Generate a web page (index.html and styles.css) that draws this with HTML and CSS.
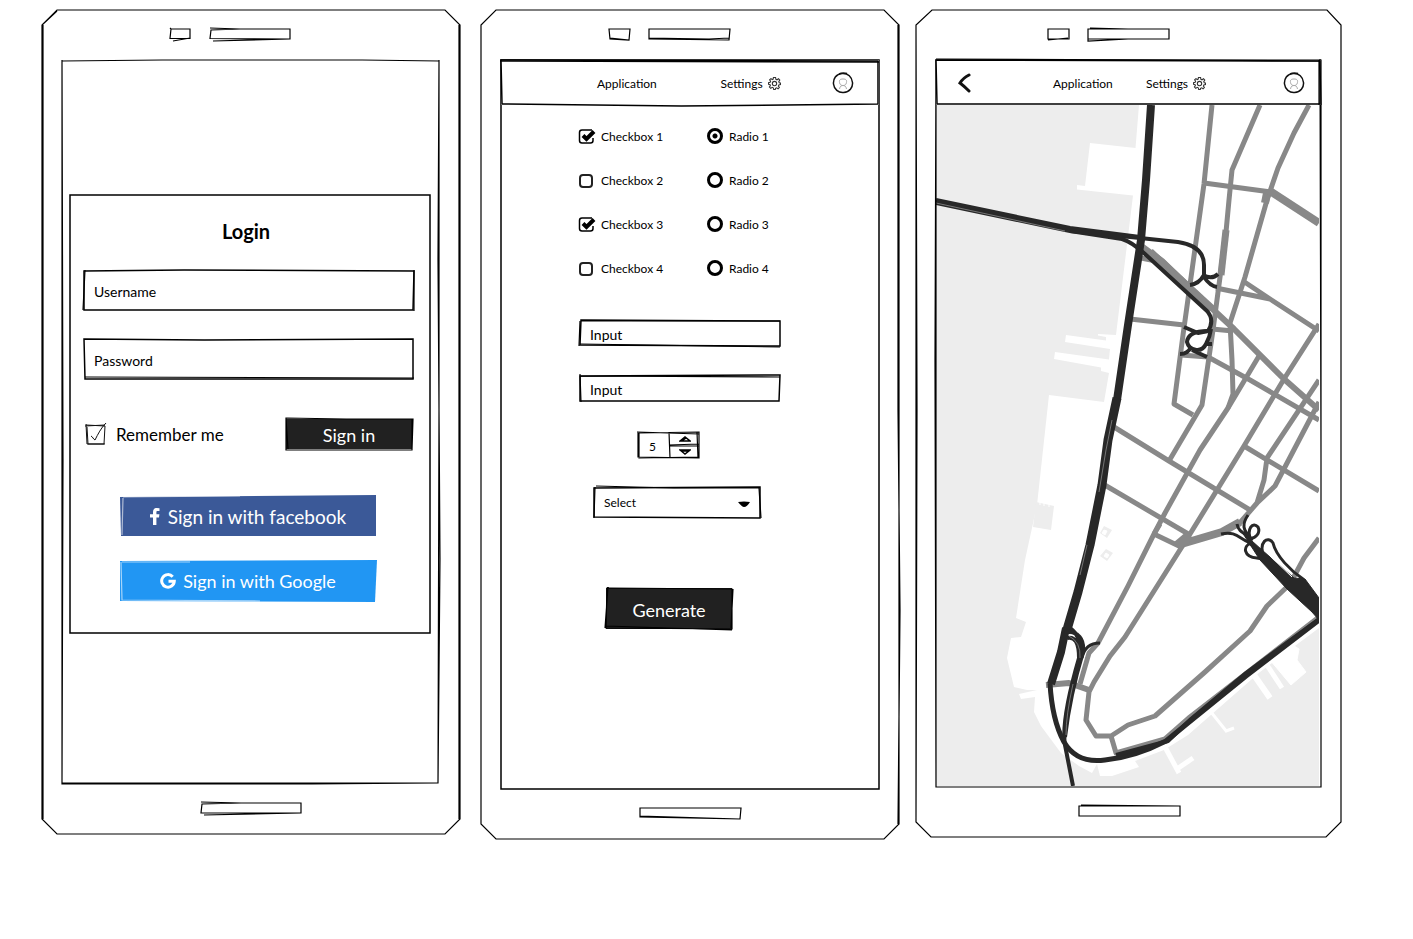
FILE: index.html
```html
<!DOCTYPE html>
<html lang="en">
<head>
<meta charset="utf-8">
<title>App wireframes</title>
<link rel="stylesheet" href="styles.css">
</head>
<body>
<svg class="defs" aria-hidden="true">
  <symbol id="gear" viewBox="0 0 24 24"><path d="M10 1h4l.6 3.2 2 .9L19.400 3.200l2.300 2.600-1.800 2.700.8 2L23 11v3l-3 .8-.8 2 1.800 2.600-2.400 2.400-2.700-1.800-2 .9L13.500 23h-3l-.8-3-2-.9-2.600 1.800-2.500-2.500 1.800-2.600-.8-2L1 13.500v-3l3-.7.8-2L3 5.200 5.400 3l2.500 1.700 1.700-.8z"/><circle cx="12" cy="12" r="4"/></symbol>
  <symbol id="avatar" viewBox="0 0 22 22"><path class="ring" d="M10 1.500C4 2 1 7 1.500 12c.5 5 5 9 10 8.500 6-.5 9.500-5 9-10C20 5 16 1 10 1.500M7 2c2-1 5-1.300 8-.5"/><path class="person" d="M8 12c-1.500-4 0-5 3-5s4.500 1 3 5c-1 2-5 2-6 0M7.500 17c.5-3 2-3.500 3.500-3.500s3 .5 3.500 3.500"/></symbol>
  <symbol id="tick" viewBox="0 0 18 16" overflow="visible"><path class="box" d="M14 2H4Q1.500 2 1.500 4.500v8Q1.500 15 4 15h8.500Q15 15 15 12.500V10"/><path class="bold" d="M5 7.500l3.500 3.500L16 3.500"/></symbol>
</svg>
<main class="board">

  <section class="phone phone-login" aria-label="Login screen">
    <svg class="sketch" viewBox="0 0 418 826" preserveAspectRatio="none" aria-hidden="true"><path d="M15 0H403L418 15V811L403 826H15L0 811V15zM1 15V811M417 15V811M0 15L15 1"/></svg>
    <div class="speaker">
      <span class="cam"><svg class="sketch" viewBox="0 0 20 10" preserveAspectRatio="none"><path d="M0-1L1 0H20V9.500L0 9.500 1 0M3 12L20 9"/></svg></span>
      <span class="slot"><svg class="sketch" viewBox="0 0 80 10" preserveAspectRatio="none"><path d="M0-1L30 0H80V10L0 9.500 1 1 30 0M3 12L80 10"/></svg></span>
    </div>
    <div class="screen login-screen">
      <svg class="sketch" viewBox="0 0 378 726" preserveAspectRatio="none" aria-hidden="true"><path d="M0 1L100 0H300L377 1V350L376 725 0 725zM0 0L1 400 0 726H250L376 725M377 0L376 200 378 500 376 725"/></svg>
      <form class="card">
        <svg class="sketch" viewBox="0 0 360 440" preserveAspectRatio="none" aria-hidden="true"><path class="firm" d="M0 0H360V440H0z"/></svg>
        <h1>Login</h1>
        <div class="field"><svg class="sketch" viewBox="0 0 330 40" preserveAspectRatio="none"><path class="firm" d="M0 1L100 0 330 1 329 40 0 40z"/><path d="M1 0L-1 40M330 0V41"/></svg><input type="text" placeholder="Username" aria-label="Username"></div>
        <div class="field"><svg class="sketch" viewBox="0 0 330 40" preserveAspectRatio="none"><path class="firm" d="M0 0L120 1 329 0V40L1 40z"/><path d="M1 38L330 39"/></svg><input type="password" placeholder="Password" aria-label="Password"></div>
        <div class="row">
          <label class="remember"><span class="box20"><input type="checkbox" checked><svg viewBox="0 0 22 22" aria-hidden="true"><path d="M1 2L20 3 19 21 2 21 1 1M0 3L20 2M2 4l1 17h17"/><path class="mark" d="M6 13c2 1 2 3 4 4 3-6 6-12 11-17"/></svg></span>Remember me</label>
          <button class="btn dark signin" type="button"><svg class="sketch" viewBox="0 0 126 30" preserveAspectRatio="none"><path d="M0-1L60 0H127L126 31H0zM0 0L2 30M126 0V30"/></svg><span>Sign in</span></button>
        </div>
        <button class="btn social facebook" type="button"><svg class="sketch fill" viewBox="0 0 256 40" preserveAspectRatio="none"><path d="M0 1L256-1V40L1 40z"/><path class="light" d="M3 2L2 39M3 1L120 0"/></svg><svg class="fb" viewBox="0 0 10 17" aria-hidden="true"><path d="M3 17V9.500H0V6.300h3V4C3 1.300 4.500 0 6.800 0L9.500.2V3H7.700C6.600 3 6.400 3.500 6.400 4.300v2h3L9 9.500H6.400V17z"/></svg><span>Sign in with facebook</span></button>
        <button class="btn social google" type="button"><svg class="sketch fill" viewBox="0 0 256 40" preserveAspectRatio="none"><path d="M0 0L257-1 255 41 0 40z"/><path class="light" d="M1 1L2 39 140 40M2 1H70"/></svg><svg class="goo" viewBox="0 0 16 16" aria-hidden="true"><path d="M12.700 3.700A6.300 6.300 0 1 0 14.300 8.200H8.500"/></svg><span>Sign in with Google</span></button>
      </form>
    </div>
    <div class="home"><span class="slot wide"><svg class="sketch" viewBox="0 0 100 10" preserveAspectRatio="none"><path d="M0-1L40 0H100V10H0L1 1 40 0M3 12L100 10"/></svg></span></div>
  </section>

  <section class="phone" aria-label="Form screen">
    <svg class="sketch" viewBox="0 0 418 829" preserveAspectRatio="none" aria-hidden="true"><path d="M15 0H403L418 15V814L403 829H15L0 814V15zM417 15V400L419 600 417 814"/></svg>
    <div class="speaker">
      <span class="cam"><svg class="sketch" viewBox="0 0 20 10" preserveAspectRatio="none"><path d="M0 0H21L20 11 1 10zM1 9L20 11"/></svg></span>
      <span class="slot"><svg class="sketch" viewBox="0 0 80 10" preserveAspectRatio="none"><path d="M0 0H81L80 11 0 10zM0 9L60 10 80 9"/></svg></span>
    </div>
    <div class="screen form-screen">
      <svg class="sketch" viewBox="0 0 377 728" preserveAspectRatio="none" aria-hidden="true"><path class="firm" d="M0 0H377V728H0z"/></svg>
      <nav class="bar">
        <svg class="sketch" viewBox="0 0 377 44" preserveAspectRatio="none"><path class="firm" d="M0 0L376 1 376 43 180 45 1 43z"/><path class="firm" d="M-1 1L377 2"/></svg>
        <a href="#application">Application</a>
        <a class="settings" href="#settings">Settings<svg class="gear"><use href="#gear"/></svg></a>
        <a class="user" href="#account" aria-label="Account"><svg class="avatar"><use href="#avatar"/></svg></a>
      </nav>
      <form class="controls">
        <div class="options">
          <label><span class="pick"><input type="checkbox" checked><svg class="cb"><use href="#tick"/></svg></span>Checkbox 1</label>
          <label><input class="radio" type="radio" name="choice" checked>Radio 1</label>
          <label><span class="pick"><input type="checkbox"></span>Checkbox 2</label>
          <label><input class="radio" type="radio" name="choice">Radio 2</label>
          <label><span class="pick"><input type="checkbox" checked><svg class="cb"><use href="#tick"/></svg></span>Checkbox 3</label>
          <label><input class="radio" type="radio" name="choice">Radio 3</label>
          <label><span class="pick"><input type="checkbox"></span>Checkbox 4</label>
          <label><input class="radio" type="radio" name="choice">Radio 4</label>
        </div>
        <div class="field small"><svg class="sketch" viewBox="0 0 200 26" preserveAspectRatio="none"><path class="firm" d="M1 0L200 1V26L0 25z"/><path d="M0 1L-1 26M0 24L200 27M1 1H200"/></svg><input type="text" placeholder="Input" aria-label="First input"></div>
        <div class="field small"><svg class="sketch" viewBox="0 0 200 26" preserveAspectRatio="none"><path class="firm" d="M0 1L200 0 199 26H0z"/><path d="M0-1L1 27M0 1L200 2"/></svg><input type="text" placeholder="Input" aria-label="Second input"></div>
        <div class="stepper">
          <svg class="sketch" viewBox="0 0 61 26" preserveAspectRatio="none"><path d="M0 1L61 0V26L0 25zM-1 0L61 2M1 0V26L61 25M31 0L32 26M31 13L61 12M32 14L61 14M59 0L60 26"/></svg>
          <input type="text" inputmode="numeric" value="5" aria-label="Quantity">
          <div class="steps"><button type="button" aria-label="Increase"><svg viewBox="0 0 12 6"><path d="M1 5L6 1 11 5zM2 5L7 2"/></svg></button><button type="button" aria-label="Decrease"><svg viewBox="0 0 12 6"><path d="M1 1L6 5 11 1zM2 2h8"/></svg></button></div>
        </div>
        <div class="select"><svg class="sketch" viewBox="0 0 166 31" preserveAspectRatio="none"><path class="firm" d="M0 1L166 0V31L0 30z"/><path d="M2-1L80 1 165 1 167 31M1 0L0 31"/></svg><select aria-label="Select"><option>Select</option></select><svg class="arrow" viewBox="0 0 12 8"><path d="M0 2Q6 1 12 2 9 7 6 7 4 7 0 2"/></svg></div>
        <button class="btn dark generate" type="button"><svg class="sketch" viewBox="0 0 126 41" preserveAspectRatio="none"><path d="M1 0L126 1V41L0 40zM2-1L-1 40M0 38L126 42M127 1L125 40"/></svg><span>Generate</span></button>
      </form>
    </div>
    <div class="home"><span class="slot wide"><svg class="sketch" viewBox="0 0 100 10" preserveAspectRatio="none"><path d="M0 0H101L100 11 0 9zM0 8L100 11"/></svg></span></div>
  </section>

  <section class="phone" aria-label="Map screen">
    <svg class="sketch" viewBox="0 0 425 827" preserveAspectRatio="none" aria-hidden="true"><path d="M16 0H411L425 15V812L410 827H15L0 812V15zM0 15L1 400 0 812"/></svg>
    <div class="speaker">
      <span class="cam"><svg class="sketch" viewBox="0 0 20 10" preserveAspectRatio="none"><path d="M0 0H21V10H0zM0 11L20 9"/></svg></span>
      <span class="slot"><svg class="sketch" viewBox="0 0 80 10" preserveAspectRatio="none"><path d="M0 0H81V10H0zM0 9V12L40 10M2-1L40 0"/></svg></span>
    </div>
    <div class="screen map-screen">
      <svg class="sketch" viewBox="0 0 385 726" preserveAspectRatio="none" aria-hidden="true"><path d="M0 0H385V726H0zM0 0L-1 300 0 726H200M384 0L385 400"/></svg>
      <nav class="bar bar-back">
        <svg class="sketch" viewBox="0 0 385 44" preserveAspectRatio="none"><path class="firm" d="M0 0L384 1V43H1z"/><path d="M0-1L240 0 384 1M384-1L385 44M383 0V44"/></svg>
        <button class="back" type="button" aria-label="Back"><svg viewBox="0 0 14 20"><path d="M11 2Q5 5 2 10 6 13 11 18"/></svg></button>
        <a href="#application">Application</a>
        <a class="settings" href="#settings">Settings<svg class="gear"><use href="#gear"/></svg></a>
        <a class="user" href="#account" aria-label="Account"><svg class="avatar"><use href="#avatar"/></svg></a>
      </nav>
      <svg class="map" viewBox="936 105 385 682" role="img" aria-label="City map">
        <clipPath id="land-area"><path d="M936 105H1319V786H936z"/></clipPath>
        <g clip-path="url(#land-area)">
        <g class="water">
          <path d="M936 105H1139L1135.500 148 1090 143 1085 186 1077 185V189.500L1133 195.500 1116 335 1098 334V335.500L1106 337V340.500L1066 335 1065 342 1110 349 1109 359.500 1055 352 1054 359 1101 367.500V371L1109 373 1104 402 1049 395 1037 505 1025 560 1016 618 1026 622 1021 637 1011 638 1007 658 1014 687 1027 690 1037 690 1019 694 1021 699 1035 697 1034 712 1041 726 1061 753 1079 766 1092 773 1097 764 1100 776 1112 776 1139 767 1135 761 1164 750 1188 735 1260 672 1319 628V786H936z"/>
          <path d="M1036 502L1054 506 1051 530 1033 527z"/>
          <path d="M1104 526l8 4-5 8-7-5zM1106 549l7 4-6 8-7-5z"/>
        </g>
        <g class="pier">
          <path d="M1165 747L1179 773M1177 769L1193 758" stroke-width="5"/><path d="M1211 712L1227 732M1226 731L1234 728" stroke-width="3"/><path d="M1254 675L1270 698" stroke-width="6"/><path d="M1265 662L1282 688" stroke-width="5"/>
          <path class="land" d="M1270 660L1291 685 1306 672 1297 660 1299 649 1288 642zM1104 530l3 1-2 4-3-2zM1106 553l3 2-2 3-3-2z"/>
          <path d="M1040 502v3M1044 503v3M1049 504v3" stroke-width="1"/>
        </g>
        <g class="street">
          <path d="M1212 105L1204 184 1183 335 1174 404 1193 415"/>
          <path d="M1260 105L1232 170 1229 200 1226 232 1213 330 1202 405 1169 461"/>
          <path d="M1309 105L1294 133 1278 168 1267 200 1245 277 1230 323 1232 360 1233 394 1228 408"/>
          <path d="M1226 230L1221 275"  stroke-width="7"/><path d="M1267 193L1265 203" stroke-width="8"/>
          <path d="M1204 183L1271 192"/><path d="M1270 191L1319 223" stroke-width="8"/>
          <path d="M1140 245L1162 261 1190 288 1234 329 1284 379 1319 410" stroke-width="6"/>
          <path d="M1150 252L1212 309" stroke-width="8"/>
          <path d="M1141 258L1156 261M1130 319L1184 325M1212 329L1233 331M1216 288L1270 299M1243 281L1270 299 1319 331M1319 324L1284 379 1244 446 1190 534 1125 637 1110 656 1094 682 1089 692 1086 720 1096 736H1111L1128 725 1155 716 1205 672 1250 631 1267 606 1290 584 1304 558 1319 538"/>
          <path d="M1259 356L1228 408 1200 450 1165 513 1154 534 1128 586 1098 643 1089 653 1080 684"/>
          <path d="M1181 355L1208 357 1250 380 1319 420M1319 380L1267 458 1264 480 1257 503 1238 525M1319 402L1275 486 1257 503M1244 446L1319 491M1114 427L1169 461 1250 510M1103 484L1190 535M1154 534L1181 547M1154 534L1160 524"/>
          <path d="M1178 545L1222 532 1240 522" stroke-width="8"/><path d="M1177 546L1190 535" stroke-width="10"/>
          <path d="M1046 685L1069 683 1089 690" stroke-width="6"/><path d="M1111 736L1116 753 1165 739 1190 717 1319 617"/>
        </g>
        <g class="highway">
          <path d="M1151 105L1146 180 1141 240 1128 325 1117 400" stroke-width="8"/><path d="M1117 398L1108 440 1102 485 1090 545 1078 592 1066 633" stroke-width="9"/><path d="M1066 628L1061 652 1051 684" stroke-width="8"/>
          <path d="M936 203L1070 231 1140 238 1178 242Q1204 246 1204 265V275Q1199 284 1190 285M1203 275Q1212 280 1218 274M1204 277Q1210 286 1217 287"/>
          <path d="M936 200L1070 228 1140 237M1070 231L1122 239Q1132 242 1145 254L1207 311Q1215 320 1208 331L1198 333 1184 327"/>
          <path d="M1208 331Q1188 331 1187 342C1189 350 1201 354 1206 344Q1210 337 1211 329M1206 344H1212M1180 354Q1188 354 1191 347M1192 350L1207 357"/>
          <path d="M1065 631Q1085 632 1083 652Q1070 695 1065 737M1067 638Q1079 635 1079 658Q1061 720 1065 745L1073 786M1071 629Q1081 636 1081 656" /><path class="ramp" d="M1100 643Q1085 643 1082 658"/>
          <path d="M1050 683Q1052 720 1064 742Q1077 764 1105 760 1135 757 1166 741L1188 723 1246 676 1319 620" stroke-width="5"/>
          <path d="M1116 755L1168 741 1191 719 1246 673 1319 619"/>
          <g class="ramp">
          <path d="M1221 534C1235 531 1238 537 1248 542L1268 558 1300 591 1319 616"/><path d="M1248 515C1242 524 1242 530 1252 539C1240 531 1238 530 1237 524M1250 538C1255 539 1261 533 1258 527 1253 521 1246 529 1251 540"/>
          <path d="M1253 542C1241 546 1244 557 1257 558L1268 560 1291 585M1264 557C1258 542 1268 535 1273 543 1276 556 1291 571 1303 579L1319 605M1266 558L1293 583 1317 614"/>
          </g>
          <path class="solid" d="M1242 532L1262 550 1294 578 1305 579 1319 598V620L1312 612 1287 589 1260 560z"/>
          <path class="gap" d="M1270 556L1292 577"/>
        </g>
        <g class="lane"><path d="M936 203L1065 231M1112 420L1106 450 1099 492M1087 545L1080 575M1069 636Q1081 642 1080 658M1073 684Q1066 715 1066 735"/></g>
        </g>
      </svg>
    </div>
    <div class="home"><span class="slot wide"><svg class="sketch" viewBox="0 0 100 10" preserveAspectRatio="none"><path d="M0 0H101V10H0zM2-1L100 0"/></svg></span></div>
  </section>
</main>
</body>
</html>
```
FILE: styles.css
```css
* { box-sizing: border-box; }
body { margin: 0; background: #fff; color: #000; font-family: Lato, "Open Sans", sans-serif; font-size: 12px; }
a { color: inherit; text-decoration: none; }
button, input, select { font: inherit; color: inherit; border: 0; background: none; padding: 0; margin: 0; border-radius: 0; }
.defs { position: absolute; width: 0; height: 0; }
svg { display: block; flex: none; }

.board { display: grid; grid-template-columns: 422fr 418fr 425fr; gap: 17px; padding: 10px 72px 40px 42px; align-items: start; }
.phone { position: relative; padding: 0 20px; min-width: 0; }
.phone-login { margin-right: 4px; }
.sketch { position: absolute; inset: 0; width: 100%; height: 100%; overflow: visible; pointer-events: none; }
.sketch path { fill: none; stroke: #000; stroke-width: 1.2px; vector-effect: non-scaling-stroke; }
.sketch .firm { stroke-width: 1.5px; }
.speaker { display: flex; justify-content: center; align-items: center; gap: 20px; height: 50px; padding: 0 42px 2px 0; }
.cam, .slot { position: relative; width: 20px; height: 10px; }
.slot { width: 80px; }
.wide { width: 100px; }
.home { display: flex; justify-content: center; align-items: center; height: 50px; padding-bottom: 2px; }
.screen { position: relative; }

.login-screen { padding: 135px 10px 151px 8px; }
.card { position: relative; padding: 20px 16px 32px 14px; display: flex; flex-direction: column; }
h1 { margin: 0 0 23px; padding-right: 6px; font-size: 20px; line-height: 32px; font-weight: 700; text-align: center; }
.field { position: relative; margin-bottom: 29px; }
.field input { display: block; width: 100%; height: 40px; padding: 3px 10px 0; font-size: 14px; outline: 0; }
::placeholder { color: #000; opacity: 1; }
.row { display: flex; justify-content: space-between; align-items: center; margin: 11px 2px 47px 0; }
.remember { display: flex; align-items: center; gap: 9px; padding-left: 1px; font-size: 17px; }
.box20 { position: relative; width: 22px; height: 22px; }
.box20 input { appearance: none; display: block; width: 22px; height: 22px; }
.box20 svg { position: absolute; inset: 0; fill: none; stroke: #111; stroke-width: 1px; overflow: visible; pointer-events: none; }
.box20 .mark { visibility: hidden; }
.box20 input:checked + svg .mark { visibility: visible; }
.btn { position: relative; display: flex; justify-content: center; align-items: center; color: #fff; font-size: 18px; cursor: pointer; }
.btn span { position: relative; }
.dark { background: #212121; }
.signin { width: 126px; height: 30px; padding-top: 2px; }
.social { width: 256px; height: 40px; margin: 0 auto 25px 36px; gap: 8px; font-size: 19px; }
.google { margin-bottom: 0; gap: 7px; font-size: 18px; }
.sketch.fill path { stroke: none; }
.facebook .sketch.fill path { fill: #3b5998; }
.google .sketch.fill path { fill: #2196f3; }
.social .sketch.fill .light { fill: none; stroke: #fff; opacity: .6; }
.fb { position: relative; width: 10px; height: 17px; fill: #fff; }
.goo { position: relative; width: 16px; height: 16px; fill: none; stroke: #fff; stroke-width: 3px; }

.bar { position: relative; display: grid; grid-template-columns: 219fr 111fr 47fr; align-items: center; height: 45px; padding-top: 1px; background: #fff; }
.bar > a:first-of-type { padding-left: 96px; }
.bar-back { grid-template-columns: 117fr 93fr 137fr 38fr; }
.bar.bar-back > a:first-of-type { padding-left: 0; }
.back { width: 14px; height: 20px; margin-left: 22px; }
.back svg { width: 14px; height: 20px; fill: none; stroke: #111; stroke-width: 3px; stroke-linecap: round; }
.settings { display: flex; align-items: center; gap: 5px; }
.gear { width: 13px; height: 13px; fill: none; stroke: #333; stroke-width: 2px; }
.avatar { width: 22px; height: 22px; fill: none; }
.ring { stroke: #111; stroke-width: 1.5px; }
.person { stroke: #aaa; stroke-width: 1px; }

.controls { padding: 9px 20px 160px 77px; }
.options { display: grid; grid-template-columns: 129px 1fr; margin-bottom: 30px; }
.options label { display: flex; align-items: center; gap: 6px; height: 44px; }
.pick { position: relative; width: 17px; height: 16px; padding: 2px 1px; }
.pick input { appearance: none; display: block; width: 14px; height: 14px; border: 2px solid #222; border-radius: 4px; }
.pick input:checked { border-color: transparent; }
.cb { position: absolute; left: 0; top: 0; width: 18px; height: 16px; fill: none; stroke: #000; pointer-events: none; }
.box { stroke-width: 1.5px; }
.bold { stroke-width: 4px; }
.radio { appearance: none; width: 16px; height: 16px; border: 3px solid #000; border-radius: 50%; }
.radio:checked { background: radial-gradient(circle, #000 0 2px, transparent 3px); }
.small { width: 200px; margin: 0 0 29px 2px; }
.small input { height: 26px; padding-top: 2px; }
.stepper { position: relative; display: flex; width: 61px; height: 26px; margin: 31px 0 0 60px; }
.stepper input { width: 32px; padding: 2px 3px 0 0; text-align: center; outline: 0; }
.steps { flex: 1; display: grid; grid-template-rows: 1fr 1fr; }
.steps button { display: grid; place-items: center; }
.steps svg { width: 12px; height: 6px; fill: none; stroke: #000; stroke-width: 1.5px; }
.select { position: relative; width: 166px; margin: 29px 0 70px 16px; }
.select select { appearance: none; display: block; width: 100%; height: 31px; padding: 0 28px 0 10px; }
.arrow { position: absolute; right: 10px; top: 13px; width: 12px; height: 8px; pointer-events: none; }
.generate { width: 126px; height: 41px; margin-left: 28px; padding-top: 2px; }

.map { width: 100%; height: auto; }
.water { fill: #ededed; }
.pier, .street, .highway, .lane { fill: none; }
.pier { stroke: #fff; }
.land { fill: #fff; }
.street { stroke: #888; stroke-width: 5px; stroke-linejoin: round; }
.highway { stroke: #282828; stroke-width: 4px; stroke-linejoin: round; }
.ramp { stroke-width: 3px; }
.solid { fill: #282828; stroke-width: 1px; }
.gap { stroke: #fff; stroke-width: 1px; }
.lane { stroke: #aaa; stroke-width: 1px; opacity: .6; }
```
